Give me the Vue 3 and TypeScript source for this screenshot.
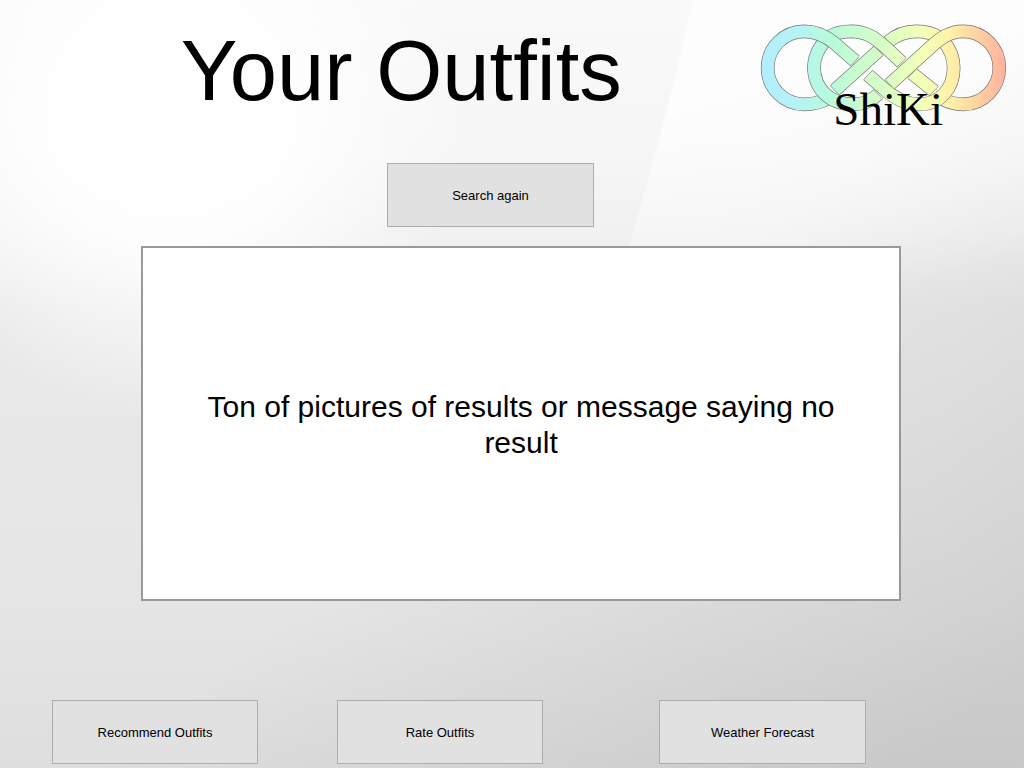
<script setup lang="ts">
interface Strand {
  d: string
  caps: string
}

const title = 'Your Outfits'
const message = 'Ton of pictures of results or message saying no result'
const actions: string[] = ['Recommend Outfits', 'Rate Outfits', 'Weather Forecast']

// Strands of the knot, back to front; caps close the ends that stop short of a crossing.
const strands: Strand[] = [
  { d: 'M240 64C258 53 280 49 306 49', caps: '' },
  { d: 'M192 160C192 126 204 104 224 78', caps: '' },
  {
    d: 'M232 251C208 265 184 268 163 268A110 109.500 0 0 1 163 49C205 49 232 66 255 86L315 138',
    caps: 'M327 125L303 152',
  },
  {
    d: 'M415 80C440 58 470 49 500 49C530 49 552 56 572 70',
    caps: 'M402 67L430 93',
  },
  {
    d: 'M192 156C192 222 240 268 312 268C340 268 364 257 384 238',
    caps: 'M370 224L398 250',
  },
  { d: 'M254 226L386 107', caps: 'M241 212L267 239M372 94L400 120' },
  { d: 'M303 49C350 49 376 70 400 91L455 142', caps: 'M469 129L441 156' },
  { d: 'M486 175L552 228', caps: 'M499 162L473 188M565 216L539 240' },
  { d: 'M642 268C615 268 592 262 570 248', caps: '' },
  {
    d: 'M354 180L400 220C436 253 472 268 508 268C570 268 611 220 611 158C611 126 600 100 578 76',
    caps: 'M368 166L340 194',
  },
  {
    d: 'M419 208L540 98C572 68 600 49 640 49A108 109.500 0 0 1 640 268H639',
    caps: 'M405 194L433 222',
  },
]
</script>

<template>
  <main class="page">
    <svg class="backdrop" viewBox="0 0 1024 768" preserveAspectRatio="none" aria-hidden="true">
      <defs>
        <linearGradient id="base" gradientUnits="userSpaceOnUse" x1="0" y1="0" x2="0" y2="768">
          <stop offset="0" stop-color="#f9f9f9" />
          <stop offset="0.2" stop-color="#f6f6f6" />
          <stop offset="0.3" stop-color="#f1f1f1" />
          <stop offset="0.4" stop-color="#e9e9e9" />
          <stop offset="0.65" stop-color="#e7e7e7" />
          <stop offset="0.8" stop-color="#e5e5e5" />
          <stop offset="1" stop-color="#dedede" />
        </linearGradient>
        <radialGradient id="glow" gradientUnits="userSpaceOnUse" cx="170" cy="120" r="300">
          <stop offset="0" stop-color="#fff" />
          <stop offset="0.4" stop-color="#fff" stop-opacity="0.9" />
          <stop offset="0.6" stop-color="#fff" stop-opacity="0.6" />
          <stop offset="1" stop-color="#fff" stop-opacity="0" />
        </radialGradient>
        <linearGradient id="shade" gradientUnits="userSpaceOnUse" x1="300" y1="600" x2="625" y2="1006">
          <stop offset="0" stop-color="#000" stop-opacity="0" />
          <stop offset="1" stop-color="#000" stop-opacity="0.1" />
        </linearGradient>
        <linearGradient id="sheen" gradientUnits="userSpaceOnUse" x1="660" y1="120" x2="720" y2="340">
          <stop offset="0" stop-color="#fff" stop-opacity="0.7" />
          <stop offset="1" stop-color="#fff" stop-opacity="0" />
        </linearGradient>
      </defs>
      <rect width="1024" height="768" fill="url(#base)" />
      <rect width="1024" height="768" fill="url(#glow)" />
      <rect width="1024" height="768" fill="url(#shade)" />
      <path d="M693 0H1024V400H584Q660 150 693 0Z" fill="url(#sheen)" />
    </svg>

    <header class="header">
      <h1 class="title">{{ title }}</h1>
      <svg class="logo" viewBox="0 0 810 360" role="img" aria-label="ShiKi">
        <defs>
          <linearGradient id="rainbow" gradientUnits="userSpaceOnUse" x1="33" y1="0" x2="768" y2="0">
            <stop offset="0" stop-color="#b3edff" />
            <stop offset="0.14" stop-color="#b5f3f5" />
            <stop offset="0.28" stop-color="#b8fadb" />
            <stop offset="0.48" stop-color="#d5fcc7" />
            <stop offset="0.66" stop-color="#f5ffb8" />
            <stop offset="0.78" stop-color="#fff0a8" />
            <stop offset="0.88" stop-color="#ffd2a1" />
            <stop offset="1" stop-color="#ffb09f" />
          </linearGradient>
        </defs>
        <g v-for="strand in strands" :key="strand.d" fill="none">
          <path :d="strand.d" stroke="#777" stroke-width="41" />
          <path :d="strand.d" stroke="url(#rainbow)" stroke-width="37" />
          <path :d="strand.caps" stroke="#888" stroke-width="2" />
        </g>
        <text class="brand" x="250" y="329">ShiKi</text>
      </svg>
    </header>

    <div class="search">
      <button type="button" class="button">Search again</button>
    </div>

    <section class="results">
      <p class="message">{{ message }}</p>
    </section>

    <nav class="actions">
      <button v-for="label in actions" :key="label" type="button" class="button">{{ label }}</button>
    </nav>
  </main>
</template>

<style>
body {
  margin: 0;
}
</style>

<style scoped>
.page {
  position: relative;
  isolation: isolate;
  box-sizing: border-box;
  display: flex;
  flex-direction: column;
  min-height: 100vh;
  padding-bottom: 4px;
  font-family: "Liberation Sans", Arial, sans-serif;
  color: #000;
}
.backdrop {
  position: absolute;
  inset: 0;
  z-index: -1;
  width: 100%;
  height: 100%;
}
.header {
  display: grid;
  grid-template-columns: 182fr auto 129fr 270px 4px;
  height: 148px;
  padding-top: 15px;
}
.title {
  grid-column: 2;
  margin: 8px 0 0;
  font-size: 85px;
  line-height: 96px;
  font-weight: 400;
  white-space: nowrap;
}
.logo {
  grid-column: 4;
  width: 270px;
  height: 120px;
}
.brand {
  font-family: "Liberation Serif", "Times New Roman", serif;
  font-size: 141px;
  fill: #000;
}
.search {
  display: grid;
  grid-template-columns: 387fr 207px 430fr;
}
.search .button {
  grid-column: 2;
}
.button {
  height: 64px;
  padding: 2px 0 0;
  border: 1px solid #adadad;
  border-radius: 0;
  background: #e1e1e1;
  color: #000;
  font-family: inherit;
  font-size: 13px;
  line-height: 16px;
}
.results {
  display: flex;
  align-items: center;
  justify-content: center;
  box-sizing: border-box;
  min-height: 355px;
  margin: 19px 12% 0 141px;
  padding: 2px 60px 0;
  border: 2px solid #999;
  background: #fff;
}
.message {
  margin: 0;
  font-size: 30px;
  line-height: 36px;
  text-align: center;
}
.actions {
  display: grid;
  grid-template-columns: 52fr 206px 79fr 206px 116fr 207px 158fr;
  margin-top: auto;
}
.actions .button:nth-child(1) {
  grid-column: 2;
}
.actions .button:nth-child(2) {
  grid-column: 4;
}
.actions .button:nth-child(3) {
  grid-column: 6;
}
</style>
